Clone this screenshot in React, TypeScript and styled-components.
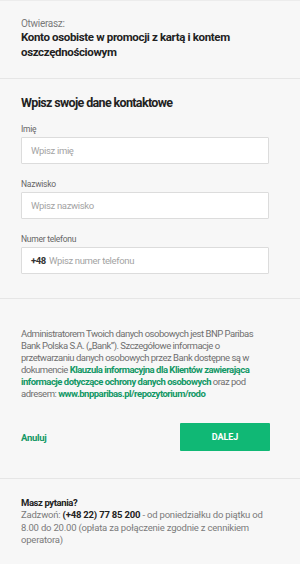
import { createGlobalStyle } from 'styled-components';
import styled from 'styled-components';

// Estilos globais
const GlobalStyle = createGlobalStyle`
  html, body {
    margin: 0;
    padding: 0;
    background: #f7f7f7;
  }
  body {
    font-family: Roboto, "Liberation Sans", sans-serif;
    color: #222;
    -webkit-font-smoothing: antialiased;
  }
  * {
    box-sizing: border-box;
  }
`;

const Page = styled.div`
  width: 300px;
  min-height: 564px;
  background: #f7f7f7;
  border-top: 1px solid #ececec;
`;

const Section = styled.section<{ $top: number; $bottom: number; $last?: boolean }>`
  padding: ${(p) => p.$top}px 30px ${(p) => p.$bottom}px 21px;
  border-bottom: ${(p) => (p.$last ? 'none' : '1px solid #e6e6e6')};
`;

const Eyebrow = styled.div`
  font-size: 10px;
  line-height: 13px;
  color: #7a7a7a;
  letter-spacing: -0.3px;
`;

const ProductTitle = styled.h1`
  margin: 0;
  font-size: 11.5px;
  line-height: 14.5px;
  font-weight: 700;
  color: #222;
  letter-spacing: -0.35px;
`;

const FormTitle = styled.h2`
  margin: 0 0 13px;
  font-size: 12.5px;
  line-height: 16px;
  font-weight: 700;
  color: #222;
  letter-spacing: -0.65px;
`;

const Fields = styled.div`
  display: flex;
  flex-direction: column;
  gap: 15px;
`;

const Field = styled.label`
  display: flex;
  flex-direction: column;
  gap: 2px;
`;

const FieldLabel = styled.span`
  font-size: 8.5px;
  line-height: 11px;
  color: #666;
  letter-spacing: -0.25px;
`;

const InputBox = styled.div`
  display: flex;
  align-items: center;
  gap: 3px;
  width: 248px;
  height: 27px;
  padding: 0 9px;
  background: #fff;
  border: 1px solid #dcdcdc;
  border-radius: 1px;
`;

const Prefix = styled.span`
  font-size: 9.5px;
  font-weight: 700;
  color: #333;
  letter-spacing: -0.4px;
`;

const Input = styled.input`
  flex: 1;
  min-width: 0;
  border: none;
  outline: none;
  background: transparent;
  padding: 0;
  font-family: inherit;
  font-size: 9.5px;
  color: #333;
  letter-spacing: -0.35px;

  &::placeholder {
    color: #a3a3a3;
  }
`;

const Paragraph = styled.p`
  margin: 0;
  font-size: 9.5px;
  line-height: 12px;
  color: #6f6f6f;
  letter-spacing: -0.5px;
`;

const GreenLink = styled.a`
  color: #139866;
  font-weight: 700;
  text-decoration: none;
`;

const Actions = styled.div`
  display: flex;
  align-items: center;
  justify-content: space-between;
  margin-top: 23px;
`;

const CancelLink = styled.a`
  font-size: 9.5px;
  font-weight: 700;
  color: #139866;
  text-decoration: none;
  letter-spacing: -0.3px;
`;

const NextButton = styled.button`
  width: 90px;
  height: 28px;
  border: none;
  border-radius: 1px;
  background: #10b875;
  color: #fff;
  font-family: inherit;
  font-size: 9px;
  font-weight: 700;
  letter-spacing: -0.1px;
  cursor: pointer;
`;

const HelpTitle = styled.div`
  font-size: 9.5px;
  line-height: 12px;
  font-weight: 700;
  color: #222;
  letter-spacing: -0.4px;
`;

const HelpText = styled.p`
  margin: 0;
  font-size: 9.5px;
  line-height: 12.5px;
  color: #7a7a7a;
  letter-spacing: -0.2px;
`;

const Phone = styled.strong`
  color: #222;
  font-weight: 700;
`;

export default function App() {
  return (
    <>
      <GlobalStyle />
      <Page>
        <Section $top={16} $bottom={19}>
          <Eyebrow>Otwierasz:</Eyebrow>
          <ProductTitle>Konto osobiste w promocji z kartą i kontem oszczędnościowym</ProductTitle>
        </Section>

        <Section $top={16} $bottom={24}>
          <FormTitle>Wpisz swoje dane kontaktowe</FormTitle>
          <Fields>
            <Field>
              <FieldLabel>Imię</FieldLabel>
              <InputBox>
                <Input placeholder="Wpisz imię" />
              </InputBox>
            </Field>
            <Field>
              <FieldLabel>Nazwisko</FieldLabel>
              <InputBox>
                <Input placeholder="Wpisz nazwisko" />
              </InputBox>
            </Field>
            <Field>
              <FieldLabel>Numer telefonu</FieldLabel>
              <InputBox>
                <Prefix>+48</Prefix>
                <Input placeholder="Wpisz numer telefonu" />
              </InputBox>
            </Field>
          </Fields>
        </Section>

        <Section $top={29} $bottom={27}>
          <Paragraph>
            Administratorem Twoich danych osobowych jest BNP Paribas Bank Polska S.A. („Bank”).
            Szczegółowe informacje o przetwarzaniu danych osobowych przez Bank dostępne są w
            dokumencie{' '}
            <GreenLink href="#">
              Klauzula informacyjna dla Klientów zawierająca informacje dotyczące ochrony danych
              osobowych
            </GreenLink>{' '}
            oraz pod adresem: <GreenLink href="#">www.bnpparibas.pl/repozytorium/rodo</GreenLink>
          </Paragraph>
          <Actions>
            <CancelLink href="#">Anuluj</CancelLink>
            <NextButton>DALEJ</NextButton>
          </Actions>
        </Section>

        <Section $top={18} $bottom={20} $last>
          <HelpTitle>Masz pytania?</HelpTitle>
          <HelpText>
            Zadzwoń: <Phone>(+48 22) 77 85 200</Phone> - od poniedziałku do piątku od 8.00 do 20.00
            (opłata za połączenie zgodnie z cennikiem operatora)
          </HelpText>
        </Section>
      </Page>
    </>
  );
}
